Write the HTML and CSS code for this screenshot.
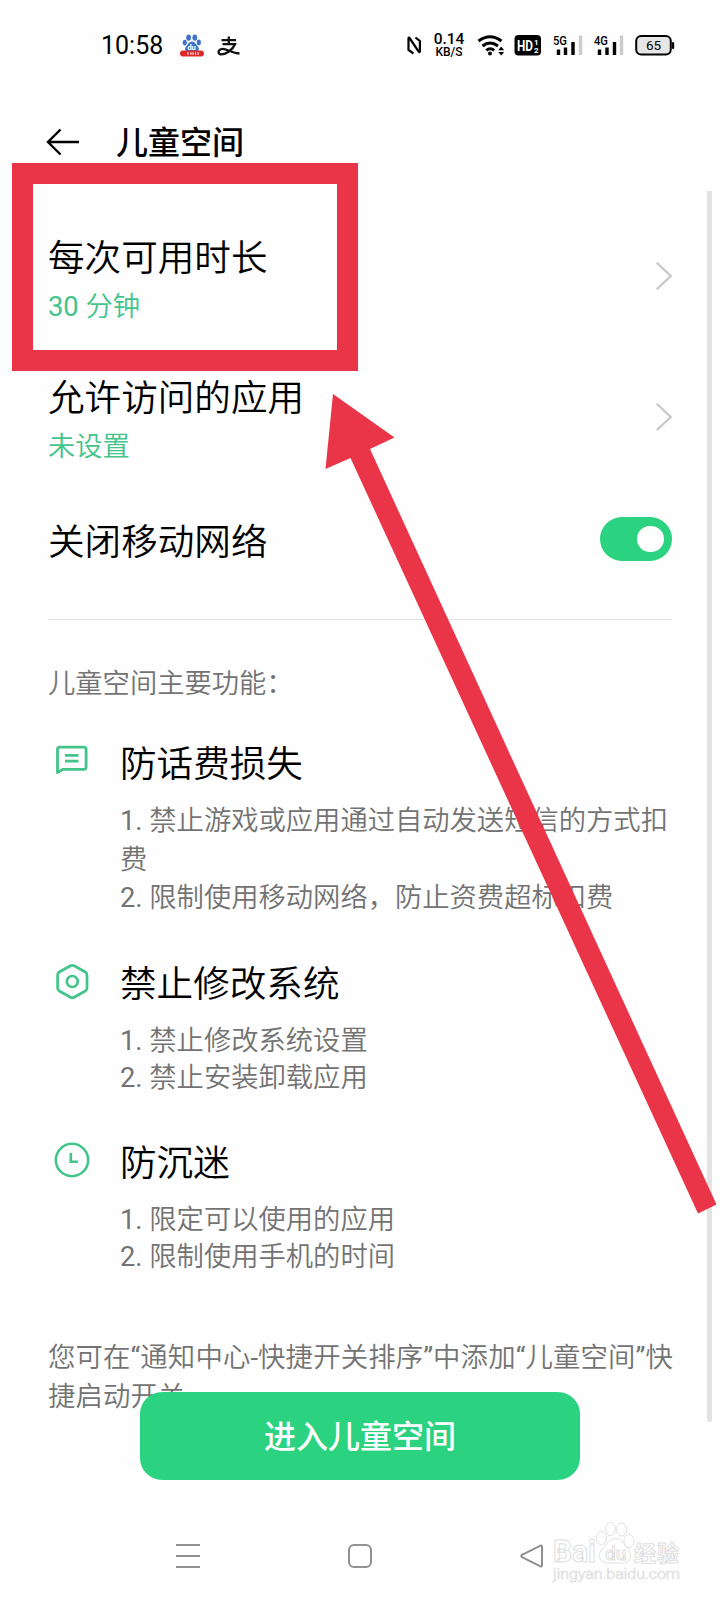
FILE: index.html
```html
<!DOCTYPE html>
<html lang="zh-CN">
<head>
<meta charset="utf-8">
<title>儿童空间</title>
<link rel="stylesheet" href="styles.css">
</head>
<body>
<div class="screen">
  <header class="status">
    <span class="time">10:58</span>
    <svg class="app-icon" width="24" height="24" viewBox="0 0 24 24">
      <g fill="#3f74c8">
        <ellipse cx="8.6" cy="3.6" rx="2.4" ry="3.2"/><ellipse cx="14.8" cy="3.6" rx="2.4" ry="3.2"/>
        <ellipse cx="4.8" cy="8.6" rx="2.1" ry="2.8"/><ellipse cx="18.8" cy="8.4" rx="2.1" ry="2.8"/>
        <path d="M12 7.600c3 0 4 3 5.800 4.800 2.200 2.200 1 5-1.800 5H8c-2.800 0-4-2.800-1.800-5C8 10.600 9 7.600 12 7.600z"/>
      </g>
      <text x="7.400" y="15.600" class="paw-text">du</text>
      <rect x="0" y="16.600" width="24" height="6" rx="3" fill="#dd2a2a"/>
      <path d="M8 18.200v2.600M11 18.200v2.600M13 18.200v2.600M15.500 18.200v2.600M18 18v3" stroke="#fff" stroke-width="1"/>
    </svg>
    <svg class="pay-icon" width="24" height="20" viewBox="0 0 24 20" fill="none" stroke="#111" stroke-width="2.300">
      <path d="M4.500 4.200h14.500M11.800 .5v7.500M5.500 8.200h12.500C15.500 14 9 18.500 4 18.300 .8 18 .8 14.500 3.800 13.200 8.500 11.400 14 17.200 22.500 17.500" />
    </svg>
    <div class="indicators">
      <svg width="25" height="40" viewBox="405 26 25 40" fill="none" stroke="#000" stroke-width="2.200">
        <path d="M413.500 53.500l-5-3.500V38.500q0-1.500 1.200-.2l9 13.200q1.200 1.400 1.200-.2V41l-4.500-3.500"/>
      </svg>
      <div class="speed"><b>0.14</b><span>KB/S</span></div>
      <svg width="30" height="40" viewBox="476 26 30 40" fill="none" stroke="#000" stroke-width="2.900">
        <path d="M478.500 41q11.500-8.500 23 0M482.500 46q7.500-6 15.500 0M486.300 50.300q4-3.200 7.900 0"/>
        <circle cx="490" cy="53.500" r="2" fill="#000" stroke="none"/>
        <path d="M498.200 50.200l3-3.700 3 3.700zM498.200 52l3 3.500 3-3.500z" fill="#000" stroke="none"/>
      </svg>
      <svg class="hd" width="27" height="40" viewBox="514 26 27 40">
        <rect x="514.500" y="35" width="26.500" height="20.500" rx="4"/>
        <text x="517" y="50.500" class="hd-text" textLength="16" lengthAdjust="spacingAndGlyphs">HD</text>
        <text x="534" y="44.500" class="hd-small">1</text><text x="534" y="53" class="hd-small">2</text>
      </svg>
      <svg class="sim" width="32" height="40" viewBox="552 26 32 40">
        <text x="553" y="45" class="gen" textLength="14" lengthAdjust="spacingAndGlyphs">5G</text>
        <path d="M558.500 49.500v5.500M565.500 47.500v7.500M573 42v13" class="bar"/><path d="M580.500 35.500v19.500" class="bar off"/>
      </svg>
      <svg class="sim2" width="32" height="40" viewBox="593 26 32 40">
        <text x="594" y="45" class="gen" textLength="14" lengthAdjust="spacingAndGlyphs">4G</text>
        <path d="M599.500 49.500v5.500M607 47.500v7.500M614.500 42v13" class="bar"/><path d="M621.500 35.500v19.500" class="bar off"/>
      </svg>
      <svg class="battery" width="40" height="40" viewBox="635 26 40 40">
        <rect x="636.200" y="36" width="34.600" height="18.600" rx="5" fill="#e6e6e6" stroke="#000" stroke-width="2"/>
        <rect x="672" y="42" width="2.200" height="7" rx="1"/>
        <text x="653.500" y="50.300" text-anchor="middle" class="level">65</text>
      </svg>
    </div>
  </header>

  <div class="titlebar">
    <svg width="34" height="28" viewBox="0 0 34 28" fill="none" stroke="#000" stroke-width="2.400">
      <path d="M14.500 1.500L2 14l12.500 12.500M2 14h31"/>
    </svg>
    <h1>儿童空间</h1>
  </div>

  <main>
    <div class="row">
      <div class="row-text"><h2>每次可用时长</h2><p><span class="num">30 </span>分钟</p></div>
      <svg class="chevron" width="16" height="28" viewBox="0 0 16 28"><path d="M1.500 1.500L14.800 14 1.500 26.500"/></svg>
    </div>
    <div class="row">
      <div class="row-text"><h2>允许访问的应用</h2><p>未设置</p></div>
      <svg class="chevron" width="16" height="28" viewBox="0 0 16 28"><path d="M1.500 1.500L14.800 14 1.500 26.500"/></svg>
    </div>
    <div class="row single">
      <h2>关闭移动网络</h2>
      <div class="switch"><i></i></div>
    </div>
    <hr>
    <p class="intro">儿童空间主要功能：</p>

    <section class="feature first">
      <svg width="48" height="48" viewBox="48 736 48 48" fill="none" stroke="#43c48a" stroke-width="2.800">
        <path d="M57.500 772.500V749.500q0-2.300 2.300-2.300h24q2.300 0 2.300 2.300v17.500q0 2.300-2.300 2.300H63z" stroke-linejoin="round"/>
        <path d="M65 755.300h13.500M65 761.200h13.500"/>
      </svg>
      <div>
        <h2>防话费损失</h2>
        <p class="wrapped"><span class="num">1. </span>禁止游戏或应用通过自动发送短信的方式扣<br>费</p>
        <p><span class="num">2. </span>限制使用移动网络，防止资费超标扣费</p>
      </div>
    </section>
    <section class="feature second">
      <svg width="48" height="48" viewBox="48 956 48 48" fill="none" stroke="#43c48a" stroke-width="2.700">
        <path d="M70.500 964.800q1.800-1 3.600 0l11.200 6.200q1.700 1 1.700 3v13q0 2-1.700 3l-11.200 6.300q-1.800 1-3.600 0L59.300 990q-1.700-1-1.700-3v-13q0-2 1.700-3z"/>
        <circle cx="72.300" cy="980.500" r="5.500"/>
      </svg>
      <div>
        <h2>禁止修改系统</h2>
        <p><span class="num">1. </span>禁止修改系统设置</p>
        <p><span class="num">2. </span>禁止安装卸载应用</p>
      </div>
    </section>
    <section class="feature third">
      <svg width="48" height="48" viewBox="48 1136 48 48" fill="none" stroke="#43c48a" stroke-width="2.600">
        <circle cx="72" cy="1160" r="16.200"/><path d="M70.800 1153v8.800h7.200"/>
      </svg>
      <div>
        <h2>防沉迷</h2>
        <p><span class="num">1. </span>限定可以使用的应用</p>
        <p><span class="num">2. </span>限制使用手机的时间</p>
      </div>
    </section>
    <p class="note">您可在<span class="num">“</span>通知中心<span class="num">-</span>快捷开关排序<span class="num">”</span>中添加<span class="num">“</span>儿童空间<span class="num">”</span>快<br>捷启动开关。</p>
  </main>

  <div class="scrollbar"></div>
  <button class="enter">进入儿童空间</button>

  <svg class="nav" width="720" height="60" viewBox="0 1525 720 60" fill="none" stroke="#909090" stroke-width="2">
    <path d="M176 1545h24M176 1556h24M176 1567h24"/>
    <rect x="349" y="1545" width="22" height="22" rx="5"/>
    <path d="M522 1554.800l18-9q2-.8 2 1.200v18q0 2-2 1.200l-18-9q-1.600-1.200 0-2.400z"/>
  </svg>

  <svg class="watermark" width="170" height="70" viewBox="550 1515 170 70" fill="#fff" stroke="#e0e0e0" stroke-width="1">
    <text x="553" y="1562" class="wm-brand" textLength="43" lengthAdjust="spacingAndGlyphs">Bai</text>
    <ellipse cx="601.500" cy="1538" rx="5" ry="6.500"/><ellipse cx="610.500" cy="1529" rx="5" ry="6.500"/>
    <ellipse cx="621.500" cy="1529.500" rx="5" ry="6.500"/><ellipse cx="629" cy="1541" rx="5" ry="6.500"/>
    <path d="M615.500 1538.500c6 0 8 5 12 10 5 6 4 14-4 14.500h-16c-9-.5-10-9-5-14.500 5-5 7-10 13-10z"/>
    <text x="605" y="1560" class="wm-du">du</text>
    <text x="634" y="1561" class="wm-cn" textLength="45">经验</text>
    <text x="553" y="1579" class="wm-url" textLength="127" lengthAdjust="spacingAndGlyphs">jingyan.baidu.com</text>
  </svg>

  <div class="highlight"></div>
  <svg class="arrow" width="720" height="1600" viewBox="0 0 720 1600">
    <polygon fill="#ea3549" points="333,394 394.500,437.500 370,449 716.500,1204.500 698,1213.500 350.500,458 325.500,469"/>
  </svg>
</div>
</body>
</html>
```
FILE: styles.css
```css
* { box-sizing: border-box; margin: 0; padding: 0; }
body { background: #fefefe; }
svg { display: block; flex: none; }
.screen {
  position: relative;
  width: 720px;
  height: 1600px;
  overflow: hidden;
  background: #fefefe;
  color: #000;
  font-family: Roboto, "Noto Sans CJK SC", sans-serif;
  font-weight: 350;
}
h2 { font-size: 36.6px; font-weight: 350; line-height: 50px; white-space: nowrap; }
p { font-size: 27.3px; white-space: nowrap; }
.num { font-weight: 400; }

.status { display: flex; align-items: center; height: 91px; padding-left: 101px; }
.time { width: 79px; font-size: 25px; font-weight: 400; line-height: 30px; padding-top: 1px; }
.pay-icon { margin-left: 13px; }
.indicators { display: flex; align-items: center; margin-left: 164px; }
.speed { display: flex; flex-direction: column; align-items: center; width: 38px; text-align: center; }
.speed b { font-size: 15.5px; line-height: 14px; font-weight: 500; }
.speed span { font-size: 12px; line-height: 13px; font-weight: 500; }
.indicators .speed + svg { margin-left: 8px; }
.indicators .hd { margin-left: 8px; }
.indicators .sim { margin-left: 11px; }
.indicators .sim2 { margin-left: 9px; }
.indicators .battery { margin-left: 10px; }
.hd-text { font-size: 14.5px; font-weight: 700; fill: #fff; }
.hd-small { font-size: 8px; font-weight: 700; fill: #fff; }
.gen { font-size: 13px; font-weight: 500; }
.bar { stroke: #000; stroke-width: 3.4; fill: none; }
.bar.off { stroke: #ccc; }
.level { font-size: 13.5px; font-weight: 400; }
.paw-text { font-size: 7.5px; font-weight: 700; fill: #fff; }

.titlebar { display: flex; align-items: center; height: 115px; padding: 0 0 14px 46px; }
.titlebar h1 { margin: 2px 0 0 36px; font-size: 32px; font-weight: 500; line-height: 44px; }

main { padding: 0 48px; }
.row { display: flex; justify-content: space-between; align-items: center; height: 140.6px; }
.row-text { align-self: flex-start; padding-top: 27.5px; }
.row-text p { margin-top: 3px; line-height: 40px; color: #43c48a; }
.row.single { height: 104px; }
.row.single h2 { padding-top: 7px; }
.chevron path { fill: none; stroke: #c9c9c9; stroke-width: 2.4; stroke-linecap: round; }
.switch { display: flex; justify-content: flex-end; align-items: center; width: 72px; height: 44px; padding-right: 8.5px; border-radius: 22px; background: #2bd280; }
.switch i { width: 26.5px; height: 26.5px; border-radius: 50%; background: #fff; }
hr { height: 1px; margin-top: 28px; border: 0; background: #e2e2e2; }
.intro { margin-top: 44px; line-height: 40px; color: #737373; }
.feature { display: flex; gap: 24px; }
.feature > svg { margin-top: -3px; }
.feature p { line-height: 37.5px; color: #737373; }
.feature h2 { margin-bottom: 12px; }
.feature p.wrapped { line-height: 39px; }
.feature.first { margin-top: 36px; }
.feature.first > svg { margin-top: -4px; }
.feature.second { margin-top: 42px; }
.feature.second h2, .feature.third h2 { margin-bottom: 13px; }
.feature.third { margin-top: 41px; }
.note { margin-top: 62px; font-size: 27.4px; line-height: 39px; letter-spacing: .12px; color: #737373; }

.scrollbar { position: absolute; left: 707px; top: 191px; width: 5px; height: 1231px; border-radius: 0 0 3px 3px; background: #e3e3e3; }
.enter { position: absolute; left: 140px; top: 1392px; width: 440px; height: 88px; padding-top: 3px; border: 0; border-radius: 22px; background: #2bd280; color: #fff; font: 500 32px/85px Roboto, "Noto Sans CJK SC", sans-serif; }
.nav { position: absolute; left: 0; top: 1525px; }
.watermark { position: absolute; left: 550px; top: 1515px; }
.wm-brand { font-size: 31px; font-weight: 700; }
.wm-du { font-size: 19px; font-weight: 500; }
.wm-cn { font-size: 22px; font-weight: 700; }
.wm-url { font-size: 15px; stroke-width: .7; }
.highlight { position: absolute; left: 12px; top: 163px; width: 346px; height: 208px; border: 21px solid #ea3549; }
.arrow { position: absolute; left: 0; top: 0; }
```
